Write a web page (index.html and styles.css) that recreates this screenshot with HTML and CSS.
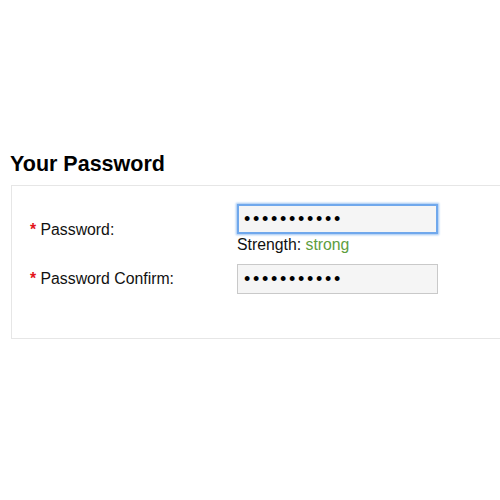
FILE: index.html
```html
<!DOCTYPE html>
<html>
<head>
<meta charset="utf-8">
<link rel="stylesheet" href="styles.css">
</head>
<body>
<h2 class="title">Your Password</h2>
<div class="panel">
  <div class="form">
    <label class="label" for="pw"><span class="req">*</span> Password:</label>
    <div class="field">
      <input id="pw" class="input focus" type="password" value="secretpass1">
      <div class="strength">Strength: <span class="strong">strong</span></div>
    </div>
    <label class="label" for="pw2"><span class="req">*</span> Password Confirm:</label>
    <div class="field">
      <input id="pw2" class="input" type="password" value="secretpass1">
    </div>
  </div>
</div>
</body>
</html>
```
FILE: styles.css
```css
html { overflow: hidden; }
body {
  margin: 0;
  background: #fff;
  font-family: "Liberation Sans", Arial, Helvetica, sans-serif;
  color: #111;
}
.title {
  margin: 152px 0 0 10px;
  font-size: 21.5px;
  font-weight: bold;
  line-height: 24px;
  color: #000;
}
.panel {
  margin: 9px 0 0 11px;
  width: 489px;
  height: 154px;
  border: 1px solid #e6e6e6;
  border-right: none;
  box-sizing: border-box;
  padding: 18px 0 0 18px;
}
.form {
  display: grid;
  grid-template-columns: 207px 201px;
  row-gap: 9px;
  align-items: center;
}
.label {
  font-size: 15.8px;
  color: #111;
}
.req {
  color: #e3141b;
  font-weight: bold;
}
.field {
  display: flex;
  flex-direction: column;
}
.input {
  width: 201px;
  height: 30px;
  box-sizing: border-box;
  border: 1px solid #c9c9c9;
  background: #f5f5f5;
  padding: 0 6px;
  margin: 0;
  font-family: "Liberation Sans", Arial, sans-serif;
  font-size: 18px;
  letter-spacing: 2.7px;
  color: #000;
  outline: none;
}
.focus {
  border: 2px solid #70a8ec;
  box-shadow: 0 0 2px 1px #9cc4f2;
  padding: 0 5px;
}
.strength {
  font-size: 15.8px;
  line-height: 20px;
  margin-top: 1px;
  color: #111;
}
.strong { color: #5e9e3e; }
```
